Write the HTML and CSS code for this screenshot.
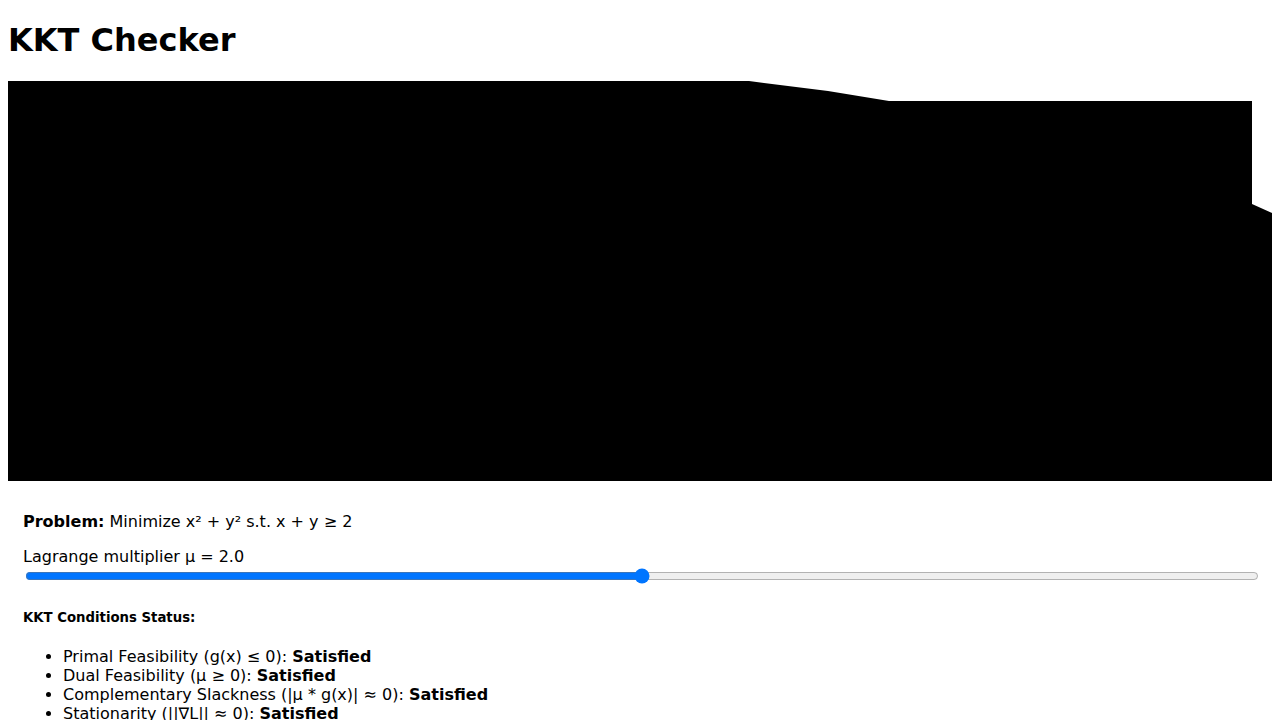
FILE: index.html
```html
<!DOCTYPE html>
<html lang="en">
<head>
<meta charset="utf-8">
<title>KKT Checker</title>
<link rel="stylesheet" href="styles.css">
</head>
<body>
<h1>KKT Checker</h1>
<svg class="plot" viewBox="0 0 1264 400" preserveAspectRatio="none" role="img" aria-label="Contour plot">
<path d="M0 0H741L820 10L881 20H1244V123L1264 132V400H0Z"/>
</svg>
<div class="controls">
<p><strong>Problem:</strong> Minimize x² + y² s.t. x + y ≥ 2</p>
<label for="mu">Lagrange multiplier μ = <span>2.0</span></label>
<input class="slider" type="range" id="mu" min="0" max="4" step="0.1" value="2">
<h5>KKT Conditions Status:</h5>
<ul>
<li>Primal Feasibility (g(x) ≤ 0): <strong>Satisfied</strong></li>
<li>Dual Feasibility (μ ≥ 0): <strong>Satisfied</strong></li>
<li>Complementary Slackness (|μ * g(x)| ≈ 0): <strong>Satisfied</strong></li>
<li>Stationarity (||∇L|| ≈ 0): <strong>Satisfied</strong></li>
</ul>
</div>
</body>
</html>
```
FILE: styles.css
```css
body {
  margin: 0 8px;
  font-family: Verdana, "DejaVu Sans", sans-serif;
}

.plot {
  display: block;
  width: 100%;
  height: 400px;
}

.controls {
  padding: 15px;
}

.slider {
  width: 100%;
  box-sizing: border-box;
}
```
